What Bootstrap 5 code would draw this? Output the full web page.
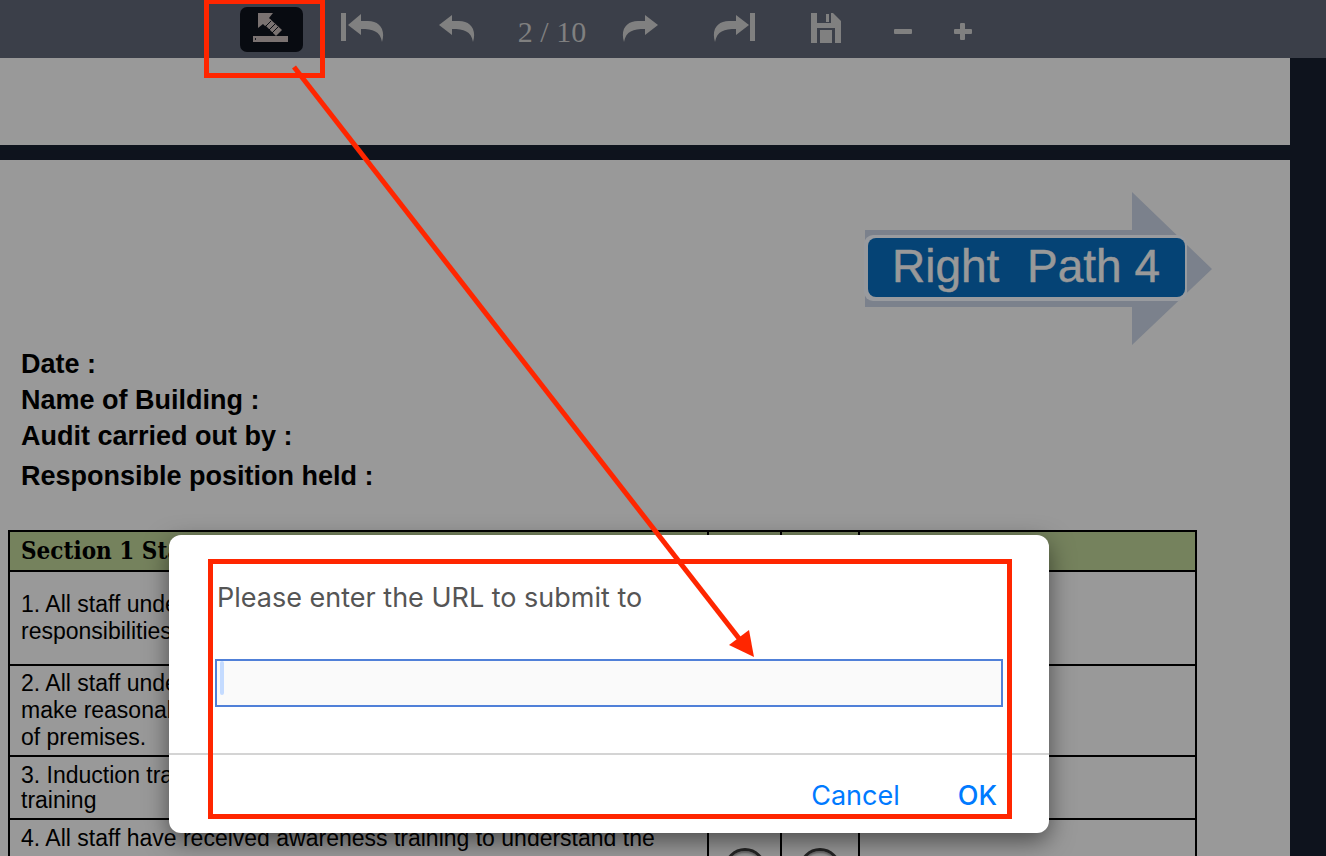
<!DOCTYPE html>
<html lang="en">
<head>
<meta charset="utf-8">
<meta name="viewport" content="width=device-width, initial-scale=1">
<title>Right Path 4 audit</title>
<link href="https://cdn.jsdelivr.net/npm/bootstrap@5.3.0/dist/css/bootstrap.min.css" rel="stylesheet">
<style>
body { background: #0e131d; color: #000; font-family: "Liberation Sans", Arial, sans-serif; font-size: 23px; line-height: 27px; }
.toolbar { display: grid; grid-template-columns: 63px 119px 70px 120px 56px 133px 50px 103px 18px; place-items: center; height: 58px; padding: 0 0 0 240px; background: #3b3f49; }
.tool { display: flex; padding: 0 0 2px; border: 0; background: none; color: #808080; }
.tool svg { display: block; fill: currentColor; }
.tool-submit { align-items: center; justify-content: center; width: 63px; height: 45px; border-radius: 7px; background: #080b11; color: #7a7271; }
.page-count { color: #808080; font: 30px/36px "Liberation Serif", "Times New Roman", serif; white-space: nowrap; padding-top: 6px; }
.sheet { background: #999; margin-right: 36px; }
.sheet-end { height: 87px; margin-bottom: 15px; }
.sheet-next { padding: 32px 93px 0 8px; }
.brand { display: block; margin: 0 -15px 0 auto; }
.facts { padding: 0 13px; margin: 0 0 36px; font-size: 27px; line-height: 36px; font-weight: 700; }
.audit { width: 100%; table-layout: fixed; border-collapse: collapse; }
.audit th, .audit td { border: 2px solid #000; padding: 0 11px; vertical-align: middle; white-space: nowrap; }
.audit thead th { height: 40px; background: #75825d; font: 700 24px/36px "DejaVu Serif Condensed", "DejaVu Serif", serif; }
.audit .tight { line-height: 25px; }
.audit .last-row td { height: 97px; vertical-align: top; padding-top: 5px; }
.audit .last-row .pick { padding: 28px 0 0; text-align: center; }
.pick input { appearance: none; width: 42px; height: 42px; margin: 0; border: 3px solid #242424; border-radius: 50%; background: #999; box-shadow: inset 0 2px 2px #666; display: inline-block; }
.prompt { position: absolute; left: 169px; top: 535px; width: 880px; max-width: calc(100% - 169px); border-radius: 12px; background: #fff; box-shadow: 0 8px 24px rgba(0,0,0,.5); font-family: Inter, "Liberation Sans", sans-serif; font-size: 27px; line-height: 36px; }
.prompt-body { padding: 45px 46px 46px; border-bottom: 2px solid #d4d4d4; }
.prompt-body label { display: block; padding-left: 2px; margin-bottom: 43px; color: #555; font-weight: 400; }
.field { position: relative; }
.field input { display: block; width: 100%; height: 48px; padding: 0 8px; border: 2px solid #5080d8; border-radius: 0; background: #fafafa; outline: 0; }
.caret-bar { position: absolute; left: 5px; top: 2px; width: 4px; height: 34px; border-radius: 2px; background: #c4dbff; }
.prompt-actions { padding: 23px 52px 19px; gap: 58px; }
.prompt-actions button { padding: 0; border: 0; background: none; color: #007aff; }
.prompt-actions .ok { font-weight: 500; }
.frame { position: absolute; border: 5px solid #ff2600; pointer-events: none; }
.frame-tool { left: 204px; top: -1px; width: 121px; height: 79px; }
.frame-prompt { left: 39px; right: 37px; top: 24px; bottom: 14px; }
.pointer { position: absolute; left: 284px; top: 60px; pointer-events: none; }
</style>
</head>
<body class="position-relative vh-100 overflow-hidden">
<header class="toolbar" role="toolbar" aria-label="Document">
  <button class="tool tool-submit" aria-label="Submit"><svg width="37" height="30" viewBox="0 0 37 30"><path d="M5 0H20L16 5L18 7L12 13L10 11L5 15Z"/><path d="M17 6L29 17L23 23L12 12Z"/><path d="M18 8L12 14M22 11L16 17M25 14L19 20" stroke="#080b11" stroke-width="1"/><path d="M0 23H35V29H0Z"/><path d="M2 25H3V27H2Z" fill="#181a20"/></svg></button>
  <button class="tool" aria-label="First page"><svg width="43" height="30" viewBox="0 0 43 30"><path d="M0 0H5V28H0ZM7 12L20 1V8H27C38 8 45 16 41 29C39 18 32 16 20 16V22Z"/></svg></button>
  <button class="tool" aria-label="Previous page"><svg width="36" height="30" viewBox="0 0 36 30"><path d="M0 12L13 2V8H20C31 8 38 16 34 29C32 18 25 16 13 16V22Z"/></svg></button>
  <span class="page-count">2 / 10</span>
  <button class="tool" aria-label="Next page"><svg width="36" height="30" viewBox="0 0 36 30"><path d="M36 12L23 2V8H16C5 8-2 16 2 29C4 18 11 16 23 16V22Z"/></svg></button>
  <button class="tool" aria-label="Last page"><svg width="43" height="30" viewBox="0 0 43 30"><path d="M37 0H42V28H37ZM36 12L23 2V8H16C5 8-2 16 2 29C4 18 11 16 23 16V22Z"/></svg></button>
  <button class="tool" aria-label="Save"><svg width="30" height="32" viewBox="0 0 30 32"><path d="M0 1H6V11H20V1H22L30 9V31H24V16H6V31H0ZM15 2H18V10H15ZM9 18H21V31H9Z"/></svg></button>
  <button class="tool" aria-label="Zoom out"><svg width="18" height="24" viewBox="0 0 18 24"><rect y="13" width="18" height="5" rx="1"/></svg></button>
  <button class="tool" aria-label="Zoom in"><svg width="18" height="24" viewBox="0 0 18 24"><rect y="13" width="18" height="5" rx="1"/><rect x="6" y="7" width="5" height="17" rx="1"/></svg></button>
</header>
<main>
  <div class="sheet sheet-end"></div>
  <article class="sheet sheet-next">
    <svg class="brand" width="348" height="154" viewBox="0 0 348 154" role="img" aria-label="Right Path 4">
      <path d="M1 38H268V0L348 77L268 153V115H1Z" fill="#7b818c"/>
      <rect x="0" y="43" width="323" height="66" rx="9" fill="#999b9f"/>
      <rect x="4" y="46" width="317" height="59" rx="8" fill="#054375"/>
      <g fill="#999" stroke="#999" stroke-width=".5" font-family="Liberation Sans, Arial, sans-serif" font-size="46"><text x="28" y="90">Right</text><text x="163" y="90">Path 4</text></g>
    </svg>
    <div class="facts">
      <div>Date :</div>
      <div>Name of Building :</div>
      <div>Audit carried out by :</div>
      <div class="pt-1">Responsible position held :</div>
    </div>
    <table class="audit">
      <colgroup><col style="width:699px"><col style="width:73px"><col style="width:78px"><col></colgroup>
      <thead><tr><th scope="col">Section 1 Sta</th><th></th><th></th><th></th></tr></thead>
      <tbody>
        <tr style="height:94px"><td>1. All staff unde<br>responsibilities</td><td></td><td></td><td></td></tr>
        <tr style="height:91px"><td>2. All staff unde<br>make reasonab<br>of premises.</td><td></td><td></td><td></td></tr>
        <tr style="height:63px"><td class="tight">3. Induction tra<br>training</td><td></td><td></td><td></td></tr>
        <tr class="last-row"><td>4. All staff have received awareness training to understand the</td><td class="pick"><input type="radio" name="q4" aria-label="Yes"></td><td class="pick"><input type="radio" name="q4" aria-label="No"></td><td></td></tr>
      </tbody>
    </table>
  </article>
</main>
<form class="prompt" role="dialog" aria-labelledby="url-label">
  <div class="prompt-body">
    <label id="url-label" for="url">Please enter the URL to submit to</label>
    <div class="field"><input id="url" type="text"><span class="caret-bar"></span></div>
  </div>
  <div class="prompt-actions d-flex justify-content-end">
    <button type="button">Cancel</button>
    <button type="button" class="ok">OK</button>
  </div>
  <div class="frame frame-prompt"></div>
</form>
<div class="frame frame-tool"></div>
<svg class="pointer" width="480" height="600" viewBox="284 60 480 600" aria-hidden="true"><path d="M294 67L741 641" stroke="#ff2600" stroke-width="5"/><path d="M754 657L729 645L749 630Z" fill="#ff2600"/></svg>
<script src="https://cdn.jsdelivr.net/npm/bootstrap@5.3.0/dist/js/bootstrap.bundle.min.js"></script>
</body>
</html>
